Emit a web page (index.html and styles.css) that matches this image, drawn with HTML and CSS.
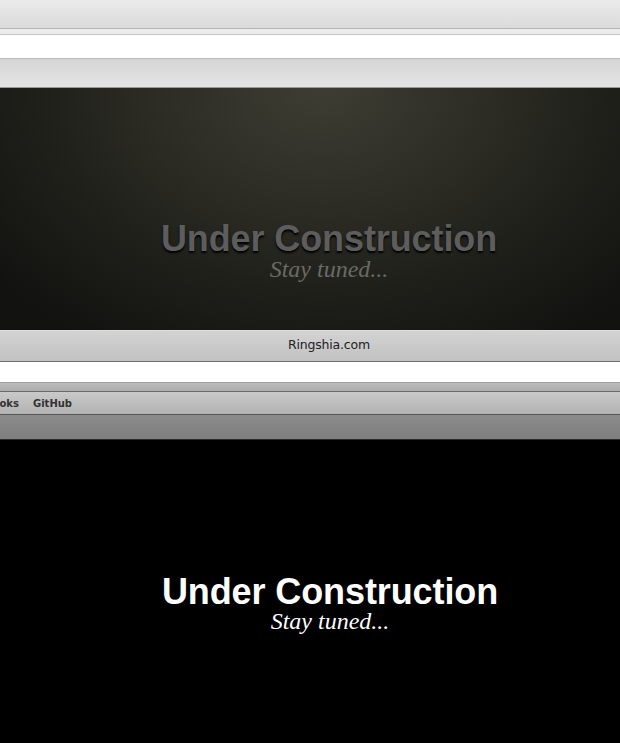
FILE: index.html
```html
<!DOCTYPE html>
<html>
<head>
<meta charset="utf-8">
<link rel="stylesheet" href="styles.css">
</head>
<body>
<div class="page">
  <div class="bar-top"></div>
  <div class="strip-light"></div>
  <div class="white-a"></div>
  <div class="bar-grad"></div>
  <section class="hero-dim">
    <h1 class="title">Under Construction</h1>
    <p class="tagline">Stay tuned...</p>
  </section>
  <div class="bar-title"><span class="site">Ringshia.com</span></div>
  <div class="white-b"></div>
  <div class="strip-gray"></div>
  <nav class="bar-links"><span class="link first">Books</span><span class="link">GitHub</span></nav>
  <div class="bar-dark"></div>
  <section class="hero-black">
    <h1 class="title">Under Construction</h1>
    <p class="tagline">Stay tuned...</p>
  </section>
</div>
</body>
</html>
```

FILE: styles.css
```css
html, body {
  margin: 0;
  padding: 0;
  background: #000;
}
.page {
  width: 620px;
  height: 743px;
  overflow: hidden;
  display: flex;
  flex-direction: column;
}
.bar-top {
  height: 28px;
  background: linear-gradient(#ebebeb, #dadada);
  border-bottom: 1px solid #b4b4b4;
  flex: none;
}
.strip-light {
  height: 5px;
  background: #ececec;
  border-bottom: 1px solid #c4c4c4;
  flex: none;
}
.white-a {
  height: 23px;
  background: #fff;
  border-bottom: 1px solid #bcbcbc;
  flex: none;
}
.bar-grad {
  height: 28px;
  background: linear-gradient(#d5d5d5, #e4e4e4);
  border-bottom: 1px solid #9a9a9a;
  flex: none;
}
.hero-dim {
  height: 242px;
  flex: none;
  box-sizing: border-box;
  padding: 134px 0 0 38px;
  background: radial-gradient(ellipse 420px 300px at 52% 0%, #3d3d33 0%, #2a2a23 45%, #1a1a16 80%, #121210 100%);
  display: flex;
  flex-direction: column;
  align-items: center;
}
.title {
  margin: 0;
  font-family: "Liberation Sans", Arial, sans-serif;
  font-weight: bold;
  font-size: 36px;
  line-height: 34px;
  letter-spacing: -0.1px;
}
.tagline {
  margin: 3px 0 0;
  font-family: "Liberation Serif", "Times New Roman", serif;
  font-style: italic;
  font-size: 24px;
  line-height: 20px;
}
.hero-dim .title {
  color: #5d5d5d;
  text-shadow: 0 2px 2px #000;
}
.hero-dim .tagline {
  color: #6a6a66;
}
.bar-title {
  height: 32px;
  flex: none;
  box-sizing: border-box;
  padding: 0 0 4px 38px;
  border-top: 1px solid #dedede;
  background: linear-gradient(#d3d3d3, #c1c1c1);
  border-bottom: 1px solid #6e6e6e;
  display: flex;
  align-items: center;
  justify-content: center;
}
.site {
  font-family: "DejaVu Sans", sans-serif;
  font-size: 12.5px;
  color: #222;
  letter-spacing: -0.2px;
}
.white-b {
  height: 20px;
  background: #fff;
  border-bottom: 1px solid #9c9c9c;
  flex: none;
}
.strip-gray {
  height: 8px;
  background: linear-gradient(#bcbcbc, #acacac);
  border-bottom: 1px solid #6a6a6a;
  flex: none;
}
.bar-links {
  height: 23px;
  flex: none;
  background: linear-gradient(#c9c9c9, #b2b2b2);
  border-bottom: 1px solid #555;
  display: flex;
  align-items: center;
  gap: 14px;
  padding-top: 1px;
  box-sizing: border-box;
}
.link {
  font-family: "DejaVu Sans", sans-serif;
  font-weight: bold;
  font-size: 10px;
  color: #333;
}
.link.first {
  margin-left: -15px;
}
.bar-dark {
  height: 24px;
  flex: none;
  background: linear-gradient(#8b8b8b, #7e7e7e);
  border-bottom: 1px solid #2a2a2a;
}
.hero-black {
  flex: 1;
  background: #000;
  box-sizing: border-box;
  padding: 135px 0 0 40px;
  display: flex;
  flex-direction: column;
  align-items: center;
}
.hero-black .title {
  color: #fff;
}
.hero-black .tagline {
  color: #fff;
  margin-top: 2px;
}
```
